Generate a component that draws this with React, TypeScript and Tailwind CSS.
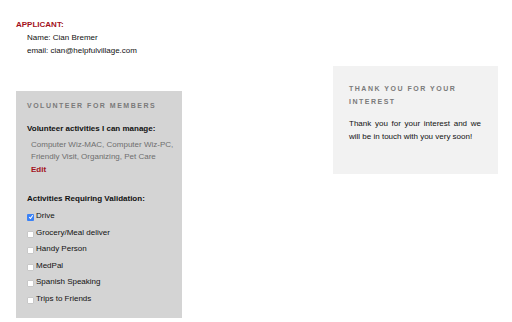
import React from "react";

const items = [
  { label: "Drive", checked: true },
  { label: "Grocery/Meal deliver", checked: false },
  { label: "Handy Person", checked: false },
  { label: "MedPal", checked: false },
  { label: "Spanish Speaking", checked: false },
  { label: "Trips to Friends", checked: false },
];

function Box({ checked }: { checked: boolean }) {
  if (checked) {
    return (
      <span className="mt-[3px] mr-[2px] flex h-[7px] w-[7px] shrink-0 items-center justify-center rounded-[1px] bg-[#3b82f6]">
        <svg width="6" height="6" viewBox="0 0 6 6">
          <path d="M1.2 3.2 L2.5 4.5 L4.8 1.3" stroke="#fff" strokeWidth="1.1" fill="none" />
        </svg>
      </span>
    );
  }
  return <span className="mt-[3px] mr-[2px] h-[7px] w-[7px] shrink-0 rounded-[1px] border border-[#c8c8c8] bg-white" />;
}

export default function App() {
  return (
    <div className="flex min-h-[322px] w-[512px] bg-white text-[8px] text-[#111] [font-family:'Liberation_Sans',Arial,sans-serif]">
      <div className="ml-[16px] flex w-[166px] flex-col pt-[18px]">
        <div className="leading-[13px] font-bold text-[#a3101b]">APPLICANT:</div>
        <div className="pl-[11px] leading-[13px]">
          <div>Name: Cian Bremer</div>
          <div>email: cian@helpfulvillage.com</div>
        </div>
        <div className="mt-[34px] flex flex-col bg-[#d4d4d4] pt-[9px] pr-[6px] pb-[11px] pl-[11px]">
          <div className="text-[7px] leading-[12px] font-bold tracking-[1.5px] text-[#7a7a7a]">VOLUNTEER FOR MEMBERS</div>
          <div className="mt-[11px] leading-[12px] font-bold">Volunteer activities I can manage:</div>
          <div className="mt-[3.75px] pl-[4px] leading-[12.5px] text-[#6e6e6e]">
            <div>Computer Wiz-MAC, Computer Wiz-PC,</div>
            <div>Friendly Visit, Organizing, Pet Care</div>
            <div className="font-bold text-[#a3101b]">Edit</div>
          </div>
          <div className="mt-[16.75px] leading-[12px] font-bold">Activities Requiring Validation:</div>
          <div className="mt-[2.7px] flex flex-col">
            {items.map((it) => (
              <div key={it.label} className="flex h-[16.6px] items-center leading-[12px]">
                <Box checked={it.checked} />
                <span>{it.label}</span>
              </div>
            ))}
          </div>
        </div>
      </div>
      <div className="mt-[66px] ml-[151px] h-[108px] w-[165px] bg-[#f2f2f2] pt-[16px] pr-[17px] pl-[16px]">
        <div className="text-[7px] leading-[13px] font-bold tracking-[1.5px] text-[#7a7a7a]">THANK YOU FOR YOUR INTEREST</div>
        <div className="mt-[9px] text-justify leading-[13px]">
          Thank you for your interest and we will be in touch with you very soon!
        </div>
      </div>
    </div>
  );
}
